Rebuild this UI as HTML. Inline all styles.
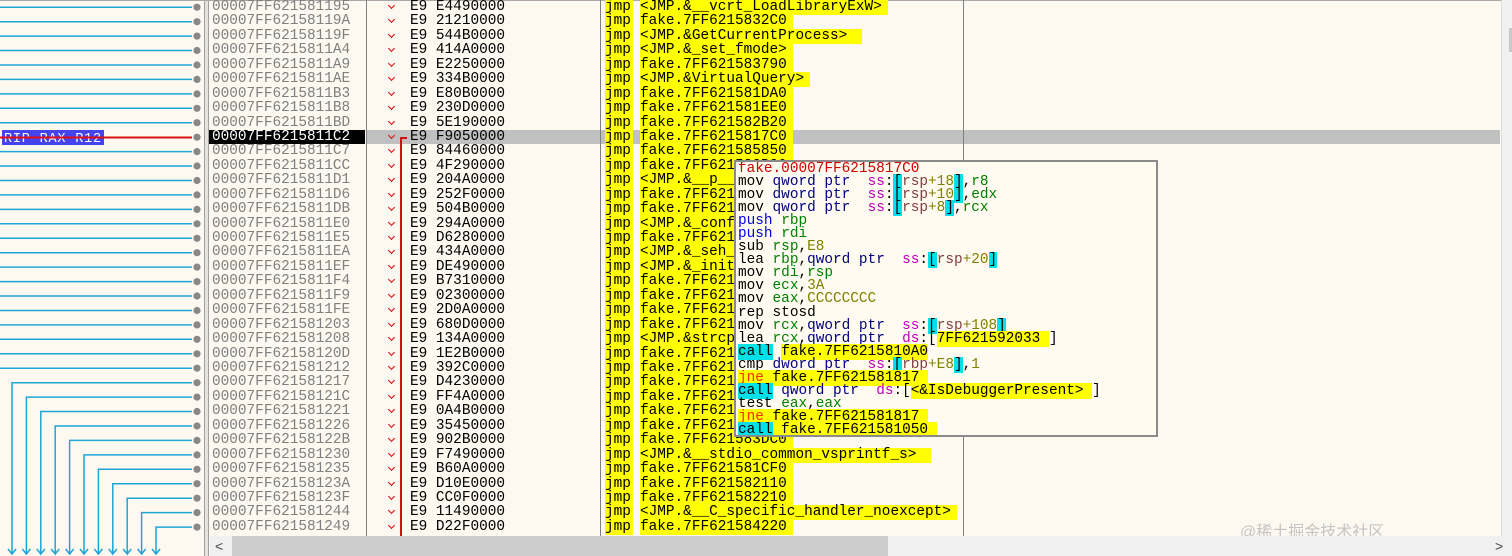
<!DOCTYPE html>
<html><head><meta charset="utf-8"><style>
*{margin:0;padding:0;box-sizing:border-box}
html,body{width:1512px;height:556px;overflow:hidden}
body{background:#fdf8f0;position:relative;font-family:"Liberation Mono",monospace;font-size:14.4px}
.r{position:absolute;left:0;width:1500px;height:14.44px;line-height:15px;white-space:pre}
.r span{position:absolute;top:0}
.a{left:212px;color:#808080}
.b{left:410px;color:#000}
.j{left:605px;background:#ff0;color:#000;padding-right:2px}
.o{left:640px;background:#ff0;color:#000;padding-right:6px}
.c{position:absolute;left:389px;top:3px;width:5px;height:5px;border-right:1.6px solid #d00;border-bottom:1.6px solid #d00;transform:rotate(45deg)}
.sel{background:#c0c0c0}
.vl{position:absolute;top:0;width:1px;height:536px;background:#808080}
#tt{position:absolute;left:734px;top:160px;width:424px;height:277px;background:#fffbf0;border:2px solid #8a8a8a;padding:1px 0 0 2px;color:#000;overflow:hidden}
#tt div{height:13.05px;line-height:13.05px;white-space:pre}
.k{color:#000080}.m{color:#c000c0}.g{color:#008000}.n{color:#808000}.rr{color:#804040}
.br{background:#00e0e8}.cy{background:#00e0e8}.y{background:#ff0}.jn{color:#ff3000;background:#ff0}.bl{color:#0000e0}.red{color:#d00000}
</style></head><body>
<svg width="210" height="556" style="position:absolute;left:0;top:0">
<g stroke="#1ea6d6" stroke-width="1.5" fill="none">
<path d="M0 7.2H192M0 21.7H192M0 36.1H192M0 50.5H192M0 65H192M0 79.4H192M0 93.9H192M0 108.3H192M0 122.7H192M0 151.6H192M0 166H192M0 180.5H192M0 194.9H192M0 209.4H192M0 223.8H192M0 238.3H192M0 252.7H192M0 267.1H192M0 281.6H192M0 296H192M0 310.5H192M0 324.9H192M0 339.3H192M0 353.8H192M0 368.2H192"/>
<path d="M12 554V382.7H192M26.4 554V397.1H192M40.8 554V411.5H192M55.2 554V426H192M69.6 554V440.4H192M84 554V454.9H192M98.4 554V469.3H192M112.8 554V483.7H192M127.2 554V498.2H192M141.6 554V512.6H192M156 554V527.1H192"/>
<path d="M8 549l4 5 4-5M22.4 549l4 5 4-5M36.8 549l4 5 4-5M51.2 549l4 5 4-5M65.6 549l4 5 4-5M80 549l4 5 4-5M94.4 549l4 5 4-5M108.8 549l4 5 4-5M123.2 549l4 5 4-5M137.6 549l4 5 4-5M152 549l4 5 4-5"/>
</g>
<rect x="2" y="130" width="102" height="15" fill="#4444ee"/>
<text x="4" y="142" fill="#fff" font-family="Liberation Mono" font-size="13.5" letter-spacing="0.8">RIP RAX R12</text>
<path d="M0 137.5H192" stroke="#e01010" stroke-width="2"/>
<g fill="#888">
<circle cx="197" cy="7.2" r="3.6"/><circle cx="197" cy="21.7" r="3.6"/><circle cx="197" cy="36.1" r="3.6"/><circle cx="197" cy="50.5" r="3.6"/><circle cx="197" cy="65" r="3.6"/><circle cx="197" cy="79.4" r="3.6"/><circle cx="197" cy="93.9" r="3.6"/><circle cx="197" cy="108.3" r="3.6"/><circle cx="197" cy="122.7" r="3.6"/><circle cx="197" cy="137.2" r="3.6"/><circle cx="197" cy="151.6" r="3.6"/><circle cx="197" cy="166" r="3.6"/><circle cx="197" cy="180.5" r="3.6"/><circle cx="197" cy="194.9" r="3.6"/><circle cx="197" cy="209.4" r="3.6"/><circle cx="197" cy="223.8" r="3.6"/><circle cx="197" cy="238.3" r="3.6"/><circle cx="197" cy="252.7" r="3.6"/><circle cx="197" cy="267.1" r="3.6"/><circle cx="197" cy="281.6" r="3.6"/><circle cx="197" cy="296" r="3.6"/><circle cx="197" cy="310.5" r="3.6"/><circle cx="197" cy="324.9" r="3.6"/><circle cx="197" cy="339.3" r="3.6"/><circle cx="197" cy="353.8" r="3.6"/><circle cx="197" cy="368.2" r="3.6"/><circle cx="197" cy="382.7" r="3.6"/><circle cx="197" cy="397.1" r="3.6"/><circle cx="197" cy="411.5" r="3.6"/><circle cx="197" cy="426" r="3.6"/><circle cx="197" cy="440.4" r="3.6"/><circle cx="197" cy="454.9" r="3.6"/><circle cx="197" cy="469.3" r="3.6"/><circle cx="197" cy="483.7" r="3.6"/><circle cx="197" cy="498.2" r="3.6"/><circle cx="197" cy="512.6" r="3.6"/><circle cx="197" cy="527.1" r="3.6"/>
</g>
</svg>
<div style="position:absolute;left:204px;top:0;width:5px;height:556px;background:#e6e2dc;border-left:1px solid #a0a0a0;border-right:1px solid #a0a0a0"></div>
<div style="position:absolute;left:0;top:0;width:1512px;height:1px;background:#a8a8a8"></div>
<div class="sel" style="position:absolute;left:366px;top:130px;width:1134px;height:14.4px"></div>
<div style="position:absolute;left:209px;top:130px;width:156px;height:14.4px;background:#000"></div>

<div class="r" style="top:0px"><span class="a">00007FF621581195</span><i class="c"></i><span class="b">E9 E4490000</span><span class="j">jmp</span><span class="o">&lt;JMP.&amp;__vcrt_LoadLibraryExW&gt;</span></div>
<div class="r" style="top:14.44px"><span class="a">00007FF62158119A</span><i class="c"></i><span class="b">E9 21210000</span><span class="j">jmp</span><span class="o">fake.7FF6215832C0</span></div>
<div class="r" style="top:28.88px"><span class="a">00007FF62158119F</span><i class="c"></i><span class="b">E9 544B0000</span><span class="j">jmp</span><span class="o">&lt;JMP.&amp;GetCurrentProcess&gt; </span></div>
<div class="r" style="top:43.32px"><span class="a">00007FF6215811A4</span><i class="c"></i><span class="b">E9 414A0000</span><span class="j">jmp</span><span class="o">&lt;JMP.&amp;_set_fmode&gt;</span></div>
<div class="r" style="top:57.76px"><span class="a">00007FF6215811A9</span><i class="c"></i><span class="b">E9 E2250000</span><span class="j">jmp</span><span class="o">fake.7FF621583790</span></div>
<div class="r" style="top:72.2px"><span class="a">00007FF6215811AE</span><i class="c"></i><span class="b">E9 334B0000</span><span class="j">jmp</span><span class="o">&lt;JMP.&amp;VirtualQuery&gt;</span></div>
<div class="r" style="top:86.64px"><span class="a">00007FF6215811B3</span><i class="c"></i><span class="b">E9 E80B0000</span><span class="j">jmp</span><span class="o">fake.7FF621581DA0</span></div>
<div class="r" style="top:101.08px"><span class="a">00007FF6215811B8</span><i class="c"></i><span class="b">E9 230D0000</span><span class="j">jmp</span><span class="o">fake.7FF621581EE0</span></div>
<div class="r" style="top:115.52px"><span class="a">00007FF6215811BD</span><i class="c"></i><span class="b">E9 5E190000</span><span class="j">jmp</span><span class="o">fake.7FF621582B20</span></div>
<div class="r" style="top:129.96px"><span class="a" style="color:#fff">00007FF6215811C2</span><i class="c"></i><span class="b">E9 F9050000</span><span class="j">jmp</span><span class="o">fake.7FF6215817C0</span></div>
<div class="r" style="top:144.4px"><span class="a">00007FF6215811C7</span><i class="c"></i><span class="b">E9 84460000</span><span class="j">jmp</span><span class="o">fake.7FF621585850</span></div>
<div class="r" style="top:158.84px"><span class="a">00007FF6215811CC</span><i class="c"></i><span class="b">E9 4F290000</span><span class="j">jmp</span><span class="o">fake.7FF621583B20</span></div>
<div class="r" style="top:173.28px"><span class="a">00007FF6215811D1</span><i class="c"></i><span class="b">E9 204A0000</span><span class="j">jmp</span><span class="o">&lt;JMP.&amp;__p___argv&gt;</span></div>
<div class="r" style="top:187.72px"><span class="a">00007FF6215811D6</span><i class="c"></i><span class="b">E9 252F0000</span><span class="j">jmp</span><span class="o">fake.7FF621584100</span></div>
<div class="r" style="top:202.16px"><span class="a">00007FF6215811DB</span><i class="c"></i><span class="b">E9 504B0000</span><span class="j">jmp</span><span class="o">fake.7FF621585D30</span></div>
<div class="r" style="top:216.6px"><span class="a">00007FF6215811E0</span><i class="c"></i><span class="b">E9 294A0000</span><span class="j">jmp</span><span class="o">&lt;JMP.&amp;_configthreadlocale&gt;</span></div>
<div class="r" style="top:231.04px"><span class="a">00007FF6215811E5</span><i class="c"></i><span class="b">E9 D6280000</span><span class="j">jmp</span><span class="o">fake.7FF621583AC0</span></div>
<div class="r" style="top:245.48px"><span class="a">00007FF6215811EA</span><i class="c"></i><span class="b">E9 434A0000</span><span class="j">jmp</span><span class="o">&lt;JMP.&amp;_seh_filter_exe&gt;</span></div>
<div class="r" style="top:259.92px"><span class="a">00007FF6215811EF</span><i class="c"></i><span class="b">E9 DE490000</span><span class="j">jmp</span><span class="o">&lt;JMP.&amp;_initterm_e&gt;</span></div>
<div class="r" style="top:274.36px"><span class="a">00007FF6215811F4</span><i class="c"></i><span class="b">E9 B7310000</span><span class="j">jmp</span><span class="o">fake.7FF6215843B0</span></div>
<div class="r" style="top:288.8px"><span class="a">00007FF6215811F9</span><i class="c"></i><span class="b">E9 02300000</span><span class="j">jmp</span><span class="o">fake.7FF621584200</span></div>
<div class="r" style="top:303.24px"><span class="a">00007FF6215811FE</span><i class="c"></i><span class="b">E9 2D0A0000</span><span class="j">jmp</span><span class="o">fake.7FF621581C30</span></div>
<div class="r" style="top:317.68px"><span class="a">00007FF621581203</span><i class="c"></i><span class="b">E9 680D0000</span><span class="j">jmp</span><span class="o">fake.7FF621581F70</span></div>
<div class="r" style="top:332.12px"><span class="a">00007FF621581208</span><i class="c"></i><span class="b">E9 134A0000</span><span class="j">jmp</span><span class="o">&lt;JMP.&amp;strcpy_s&gt;</span></div>
<div class="r" style="top:346.56px"><span class="a">00007FF62158120D</span><i class="c"></i><span class="b">E9 1E2B0000</span><span class="j">jmp</span><span class="o">fake.7FF621583D30</span></div>
<div class="r" style="top:361px"><span class="a">00007FF621581212</span><i class="c"></i><span class="b">E9 392C0000</span><span class="j">jmp</span><span class="o">fake.7FF621583E50</span></div>
<div class="r" style="top:375.44px"><span class="a">00007FF621581217</span><i class="c"></i><span class="b">E9 D4230000</span><span class="j">jmp</span><span class="o">fake.7FF6215835F0</span></div>
<div class="r" style="top:389.88px"><span class="a">00007FF62158121C</span><i class="c"></i><span class="b">E9 FF4A0000</span><span class="j">jmp</span><span class="o">fake.7FF621585D20</span></div>
<div class="r" style="top:404.32px"><span class="a">00007FF621581221</span><i class="c"></i><span class="b">E9 0A4B0000</span><span class="j">jmp</span><span class="o">fake.7FF621585D30</span></div>
<div class="r" style="top:418.76px"><span class="a">00007FF621581226</span><i class="c"></i><span class="b">E9 35450000</span><span class="j">jmp</span><span class="o">fake.7FF621585760</span></div>
<div class="r" style="top:433.2px"><span class="a">00007FF62158122B</span><i class="c"></i><span class="b">E9 902B0000</span><span class="j">jmp</span><span class="o">fake.7FF621583DC0</span></div>
<div class="r" style="top:447.64px"><span class="a">00007FF621581230</span><i class="c"></i><span class="b">E9 F7490000</span><span class="j">jmp</span><span class="o">&lt;JMP.&amp;__stdio_common_vsprintf_s&gt; </span></div>
<div class="r" style="top:462.08px"><span class="a">00007FF621581235</span><i class="c"></i><span class="b">E9 B60A0000</span><span class="j">jmp</span><span class="o">fake.7FF621581CF0</span></div>
<div class="r" style="top:476.52px"><span class="a">00007FF62158123A</span><i class="c"></i><span class="b">E9 D10E0000</span><span class="j">jmp</span><span class="o">fake.7FF621582110</span></div>
<div class="r" style="top:490.96px"><span class="a">00007FF62158123F</span><i class="c"></i><span class="b">E9 CC0F0000</span><span class="j">jmp</span><span class="o">fake.7FF621582210</span></div>
<div class="r" style="top:505.4px"><span class="a">00007FF621581244</span><i class="c"></i><span class="b">E9 11490000</span><span class="j">jmp</span><span class="o">&lt;JMP.&amp;__C_specific_handler_noexcept&gt;</span></div>
<div class="r" style="top:519.84px"><span class="a">00007FF621581249</span><i class="c"></i><span class="b">E9 D22F0000</span><span class="j">jmp</span><span class="o">fake.7FF621584220</span></div>

<div class="vl" style="left:366px"></div>
<div class="vl" style="left:600px"></div>
<div class="vl" style="left:963px"></div>
<div style="position:absolute;left:400px;top:137px;width:1.5px;height:399px;background:#d01010"></div>
<div style="position:absolute;left:400px;top:137px;width:7px;height:1.5px;background:#d01010"></div>

<div id="tt"><div class="red">fake.00007FF6215817C0</div><div>mov <span class="k">qword ptr</span>  <span class="m">ss</span>:<span class="br">[</span><span class="rr">rsp</span><span class="n">+18</span><span class="br">]</span>,<span class="g">r8</span></div><div>mov <span class="k">dword ptr</span>  <span class="m">ss</span>:<span class="br">[</span><span class="rr">rsp</span><span class="n">+10</span><span class="br">]</span>,<span class="g">edx</span></div><div>mov <span class="k">qword ptr</span>  <span class="m">ss</span>:<span class="br">[</span><span class="rr">rsp</span><span class="n">+8</span><span class="br">]</span>,<span class="g">rcx</span></div><div><span class="bl">push</span> <span class="g">rbp</span></div><div><span class="bl">push</span> <span class="g">rdi</span></div><div>sub <span class="g">rsp</span>,<span class="n">E8</span></div><div>lea <span class="g">rbp</span>,<span class="k">qword ptr</span>  <span class="m">ss</span>:<span class="br">[</span><span class="rr">rsp</span><span class="n">+20</span><span class="br">]</span></div><div>mov <span class="g">rdi</span>,<span class="g">rsp</span></div><div>mov <span class="g">ecx</span>,<span class="n">3A</span></div><div>mov <span class="g">eax</span>,<span class="n">CCCCCCCC</span></div><div>rep stosd</div><div>mov <span class="g">rcx</span>,<span class="k">qword ptr</span>  <span class="m">ss</span>:<span class="br">[</span><span class="rr">rsp</span><span class="n">+108</span><span class="br">]</span></div><div>lea <span class="g">rcx</span>,<span class="k">qword ptr</span>  <span class="m">ds</span>:[<span class="y">7FF621592033 </span>]</div><div><span class="cy">call</span> <span class="y">fake.7FF6215810A0</span></div><div>cmp <span class="k">dword ptr</span>  <span class="m">ss</span>:<span class="br">[</span><span class="rr">rbp</span><span class="n">+E8</span><span class="br">]</span>,<span class="n">1</span></div><div><span class="jn">jne</span><span class="y"> fake.7FF621581817 </span></div><div><span class="cy">call</span> <span class="k">qword ptr</span>  <span class="m">ds</span>:[<span class="y">&lt;&amp;IsDebuggerPresent&gt; </span>]</div><div>test <span class="g">eax</span>,<span class="g">eax</span></div><div><span class="jn">jne</span><span class="y"> fake.7FF621581817 </span></div><div><span class="cy">call</span><span class="y"> fake.7FF621581050 </span></div></div>

<div style="position:absolute;left:1240px;top:518px;font-family:'Liberation Sans','Noto Sans CJK SC',sans-serif;font-size:16px;color:#c4c4c4">@稀土掘金技术社区</div>
<div style="position:absolute;left:1501px;top:0;width:11px;height:536px;background:#f0f0f0;border-left:1px solid #ddd"></div>
<div style="position:absolute;left:1509px;top:28px;width:3px;height:24px;background:#c8c8c8"></div>
<div style="position:absolute;left:210px;top:536px;width:1302px;height:20px;background:#f0f0f0"></div>
<div style="position:absolute;left:232px;top:536px;width:656px;height:20px;background:#cdcdcd"></div>
<div style="position:absolute;left:215px;top:536px;font-family:'Liberation Sans',sans-serif;font-size:14px;line-height:20px;color:#444">&lt;</div>
<div style="position:absolute;left:1495px;top:536px;font-family:'Liberation Sans',sans-serif;font-size:14px;line-height:20px;color:#444">&gt;</div>
</body></html>
